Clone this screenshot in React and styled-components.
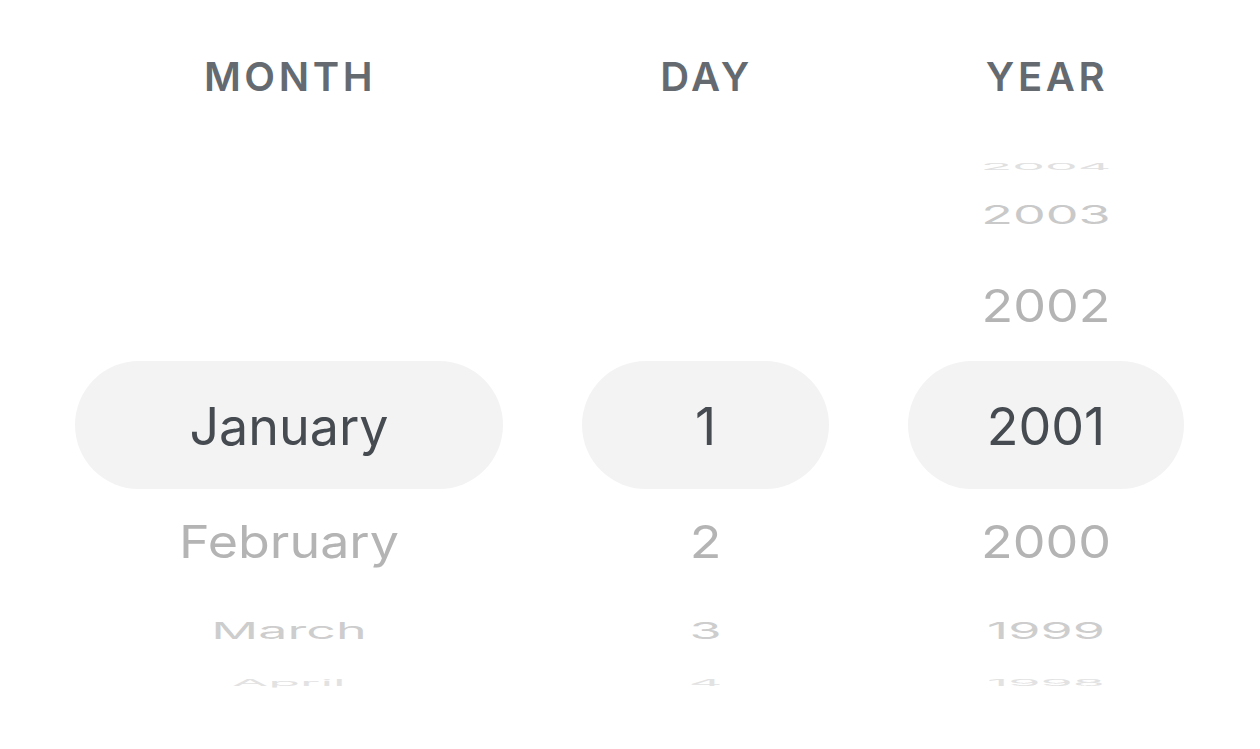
import React from 'react';
import styled, { createGlobalStyle } from 'styled-components';

const GlobalStyle = createGlobalStyle`
  html, body {
    margin: 0;
    padding: 0;
    background: #ffffff;
  }
  body {
    font-family: Inter, "Noto Sans", "Liberation Sans", sans-serif;
  }
`;

// where each row of the wheel sits (px from the selected row) and how flat it looks
const OFFSETS = [-260, -212, -120.5, 0, 115.5, 204.5, 256];
const SCALES = [0.18, 0.5, 0.86, 1, 0.88, 0.45, 0.16];
const EDGE = 24;

const slotBounds = i => {
  const last = OFFSETS.length - 1;
  const top = i === 0 ? OFFSETS[0] - EDGE : (OFFSETS[i - 1] + OFFSETS[i]) / 2;
  const bottom = i === last ? OFFSETS[last] + EDGE : (OFFSETS[i] + OFFSETS[i + 1]) / 2;
  return { top, bottom };
};

const slotHeight = i => {
  const { top, bottom } = slotBounds(i);
  return bottom - top;
};

// slots are not centred on their row, so nudge the label back onto it
const labelShift = i => {
  const { top, bottom } = slotBounds(i);
  return OFFSETS[i] - (top + bottom) / 2;
};

const FADE = ['#e0e0e0', '#c9c9c9', '#b4b4b4', '#454b50', '#b4b4b4', '#cdcdcd', '#e2e2e2'];

const Page = styled.div`
  display: flex;
  justify-content: center;
  gap: 79px;
  padding: 53px 76px 0 75px;
  height: 749px;
  box-sizing: border-box;
`;

const Column = styled.div`
  width: ${props => props.width}px;
  display: flex;
  flex-direction: column;
  align-items: center;
`;

const Heading = styled.div`
  height: 48px;
  line-height: 48px;
  font-size: 40px;
  font-weight: 600;
  letter-spacing: 3.6px;
  padding-left: 2px;
  color: #646a70;
  margin-bottom: 42px;
`;

const Wheel = styled.div`
  width: 100%;
  display: flex;
  flex-direction: column;
  align-items: center;
`;

const Slot = styled.div`
  position: relative;
  width: 100%;
  display: flex;
  align-items: center;
  justify-content: center;

  ${props =>
    props.selected &&
    `
    &::before {
      content: '';
      position: absolute;
      left: 0;
      right: 0;
      top: 50%;
      height: 128px;
      margin-top: -65px;
      border-radius: 64px;
      background: #f3f3f3;
    }
  `}
`;

const Label = styled.span`
  position: relative;
  display: block;
  font-size: 52px;
  line-height: 60px;
  white-space: nowrap;
  color: ${props => props.color};
`;

const columns = [
  {
    key: 'month',
    title: 'MONTH',
    width: 428,
    items: [null, null, null, 'January', 'February', 'March', 'April']
  },
  {
    key: 'day',
    title: 'DAY',
    width: 247,
    items: [null, null, null, '1', '2', '3', '4']
  },
  {
    key: 'year',
    title: 'YEAR',
    width: 276,
    items: ['2004', '2003', '2002', '2001', '2000', '1999', '1998']
  }
];

const PickerColumn = ({ title, width, items }) => (
  <Column width={width}>
    <Heading>{title}</Heading>
    <Wheel>
      {OFFSETS.map((offset, i) => (
        <Slot key={i} selected={offset === 0} style={{ height: slotHeight(i) }}>
          {items[i] && (
            <Label
              color={FADE[i]}
              style={{
                transform: `translateY(${labelShift(i)}px) scaleY(${SCALES[i]})`
              }}
            >
              {items[i]}
            </Label>
          )}
        </Slot>
      ))}
    </Wheel>
  </Column>
);

export default function App() {
  return (
    <>
      <GlobalStyle />
      <Page>
        {columns.map(col => (
          <PickerColumn key={col.key} {...col} />
        ))}
      </Page>
    </>
  );
}
